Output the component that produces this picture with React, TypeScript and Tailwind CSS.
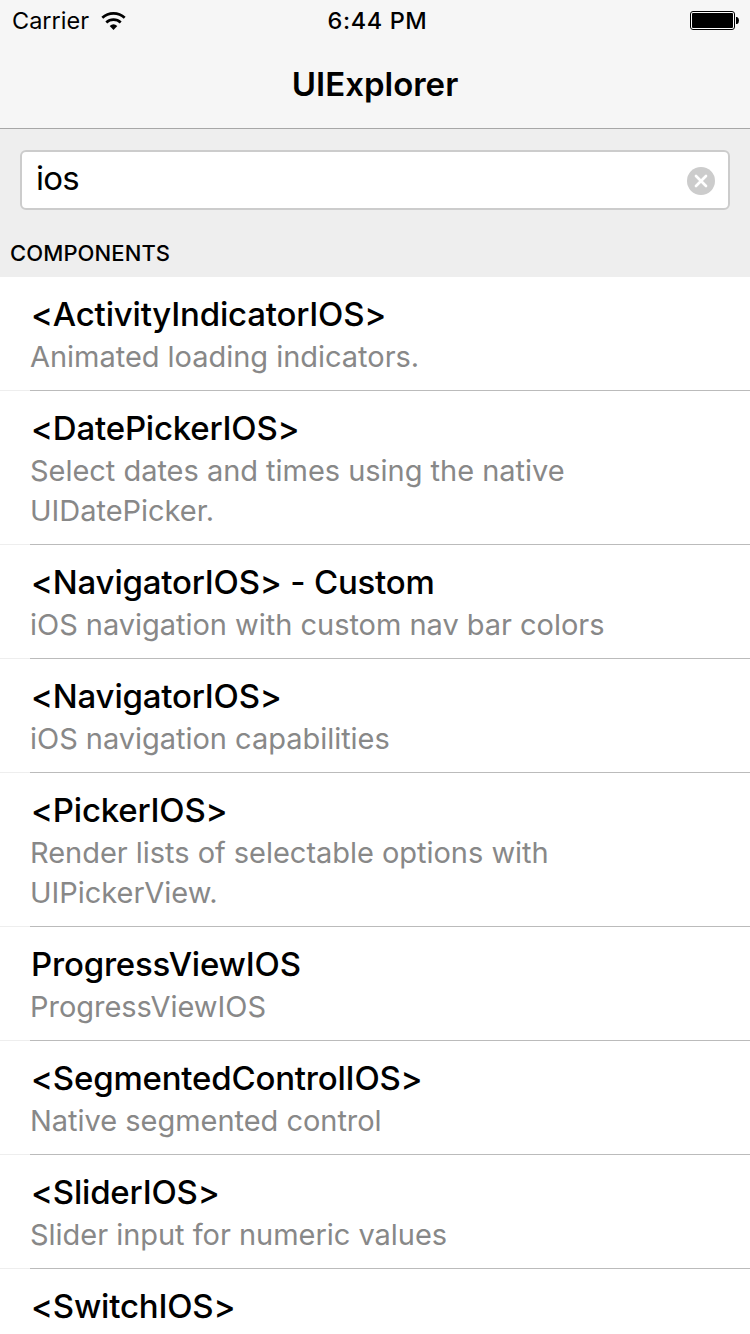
type Example = {
  title: string;
  lines?: string[];
};

const examples: Example[] = [
  { title: '<ActivityIndicatorIOS>', lines: ['Animated loading indicators.'] },
  { title: '<DatePickerIOS>', lines: ['Select dates and times using the native', 'UIDatePicker.'] },
  { title: '<NavigatorIOS> - Custom', lines: ['iOS navigation with custom nav bar colors'] },
  { title: '<NavigatorIOS>', lines: ['iOS navigation capabilities'] },
  { title: '<PickerIOS>', lines: ['Render lists of selectable options with', 'UIPickerView.'] },
  { title: 'ProgressViewIOS', lines: ['ProgressViewIOS'] },
  { title: '<SegmentedControlIOS>', lines: ['Native segmented control'] },
  { title: '<SliderIOS>', lines: ['Slider input for numeric values'] },
  { title: '<SwitchIOS>' },
];

function WifiIcon() {
  return (
    <svg width="25" height="18" viewBox="0 0 25 18" fill="none" stroke="#000" strokeWidth="2.7">
      <path d="M1.3 5.8a16.6 16.6 0 0 1 22.4 0" />
      <path d="M5.3 10.4a10.6 10.6 0 0 1 14.4 0" />
      <path d="M8.7 14a5.7 5.7 0 0 1 7.6 0L12.5 17.9Z" fill="#000" stroke="none" />
    </svg>
  );
}

function BatteryIcon() {
  return (
    <svg width="49" height="19" viewBox="0 0 49 19">
      <rect x="0.5" y="0.5" width="44" height="18" rx="2.5" fill="#fff" stroke="#000" />
      <rect x="2" y="2" width="41" height="15" rx="1" fill="#000" />
      <path d="M46 6h1.2q1.8 1 1.8 3.5T47.2 13H46Z" fill="#000" />
    </svg>
  );
}

function ClearIcon() {
  return (
    <svg width="28" height="28" viewBox="0 0 28 28">
      <circle cx="14" cy="14" r="14" fill="#ccc" />
      <path d="M9 9l10 10M19 9L9 19" stroke="#fff" strokeWidth="2.7" strokeLinecap="round" />
    </svg>
  );
}

function Header() {
  return (
    <header className="h-[129px] border-b border-[#a7a7a7] bg-[#f6f6f6]">
      <div className="grid h-10 grid-cols-[1fr_auto_1fr] items-center pl-3 pr-[11px]">
        <div className="flex items-center gap-3">
          <span className="pt-px text-[23.5px] leading-10">Carrier</span>
          <WifiIcon />
        </div>
        <span className="pl-1 pt-px text-[23.5px] font-medium leading-10 tracking-[0.6px]">6:44 PM</span>
        <div className="flex justify-end">
          <BatteryIcon />
        </div>
      </div>
      <h1 className="mt-6 text-center text-[33px] font-semibold leading-10">UIExplorer</h1>
    </header>
  );
}

function SearchBar() {
  return (
    <div className="bg-[#eee] px-5 pt-[21px]">
      <div className="flex h-[60px] items-center justify-between rounded-md border-2 border-[#ccc] bg-white pl-3.5 pr-[13px]">
        <span className="pb-1 text-[33px] leading-10 tracking-[-0.8px]">ios</span>
        <div className="pt-0.5">
          <ClearIcon />
        </div>
      </div>
    </div>
  );
}

function ExampleRow({ title, lines }: Example) {
  return (
    <li>
      <div className="px-[30px] pb-[13px] pt-[17px]">
        <h3 className="pl-px text-[33px] font-medium leading-10 tracking-[-0.2px]">{title}</h3>
        {lines && (
          <p className="mt-[3px] text-[29px] leading-10 tracking-[-0.03px] text-[#888]">
            {lines.map((line) => (
              <span key={line} className="block whitespace-nowrap">
                {line}
              </span>
            ))}
          </p>
        )}
      </div>
      <div className="flex h-px">
        <div className="w-[30px] bg-[#eee]" />
        <div className="flex-1 bg-[#bbb]" />
      </div>
    </li>
  );
}

export default function App() {
  return (
    <div className="h-[1334px] w-[750px] overflow-hidden bg-white font-['Inter',sans-serif] text-black">
      <Header />
      <SearchBar />
      <h2 className="h-[67px] bg-[#eee] pl-2.5 pt-[27px] text-[22px] font-medium leading-8 tracking-[0.1px]">
        COMPONENTS
      </h2>
      <ul>
        {examples.map((example) => (
          <ExampleRow key={example.title} {...example} />
        ))}
      </ul>
    </div>
  );
}
